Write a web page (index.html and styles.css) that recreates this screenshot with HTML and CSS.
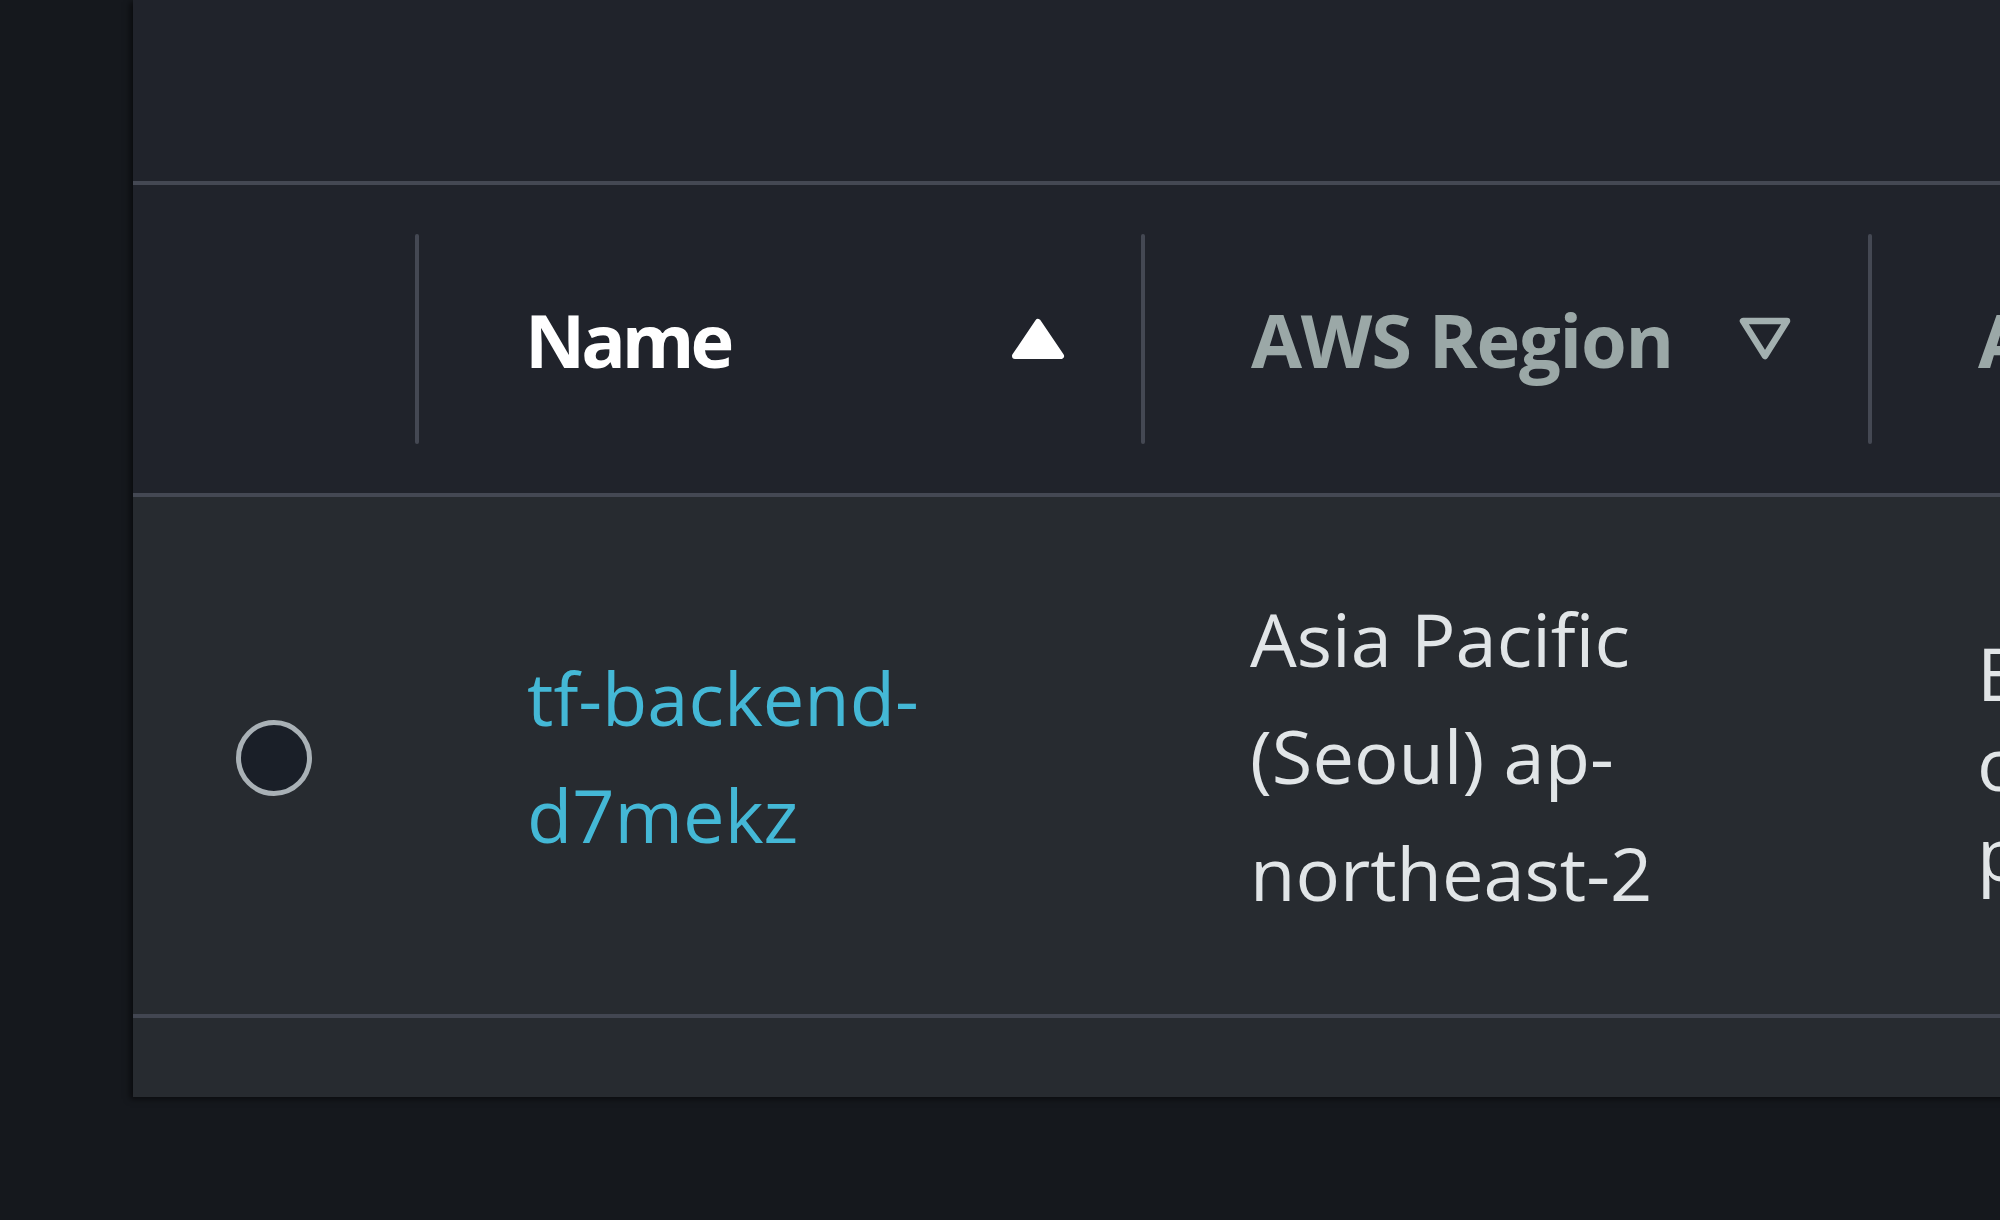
FILE: index.html
```html
<!DOCTYPE html>
<html lang="en">
<head>
<meta charset="utf-8">
<title>Buckets</title>
<link rel="stylesheet" href="styles.css">
</head>
<body>
<div class="page">
  <div class="panel">
    <div class="panel-top"></div>
    <div class="thead">
      <div class="th th-select"></div>
      <div class="th">
        <span class="divider"></span>
        <span class="th-label th-active">Name</span>
        <svg class="sort" width="56" height="44" viewBox="0 0 56 44"><path d="M28 5 L51 39 L5 39 Z" fill="#ffffff" stroke="#ffffff" stroke-width="6" stroke-linejoin="round"/></svg>
      </div>
      <div class="th">
        <span class="divider"></span>
        <span class="th-label">AWS Region</span>
        <svg class="sort" width="56" height="46" viewBox="0 0 56 46"><path d="M6 5 L50 5 L28 40 Z" fill="none" stroke="#a3b0b0" stroke-width="6.5" stroke-linejoin="round"/></svg>
      </div>
      <div class="th">
        <span class="divider"></span>
        <span class="th-label">Access</span>
      </div>
    </div>
    <div class="tbody">
      <div class="row">
        <div class="td td-select"><span class="radio"></span></div>
        <div class="td td-name"><a class="link" href="#">tf-backend-<br>d7mekz</a></div>
        <div class="td td-region">Asia Pacific<br>(Seoul) ap-<br>northeast-2</div>
        <div class="td td-access">Bucket and<br>objects not<br>public</div>
      </div>
    </div>
    <div class="tfoot"></div>
  </div>
</div>
</body>
</html>
```
FILE: styles.css
```css
html, body {
  margin: 0;
  padding: 0;
  width: 2000px;
  height: 1220px;
  overflow: hidden;
  background: #15181d;
  font-family: "Open Sans", "Noto Sans", sans-serif;
}

.page {
  display: flex;
  padding-left: 133px;
  height: 1220px;
  box-sizing: border-box;
}

.panel {
  flex: 0 0 auto;
  width: 2600px;
  height: 1097px;
  display: flex;
  flex-direction: column;
  background: #20232b;
  box-shadow: -3px 2px 6px rgba(0, 0, 0, 0.55);
}

.panel-top {
  height: 181px;
  flex: 0 0 auto;
}

.thead {
  display: grid;
  grid-template-columns: 282px 726px 727px 860px;
  height: 308px;
  border-top: 4px solid #444853;
  border-bottom: 4px solid #444853;
  background: #20232b;
  flex: 0 0 auto;
}

.th {
  display: flex;
  align-items: center;
  padding-right: 75px;
}

.divider {
  flex: 0 0 auto;
  width: 4px;
  height: 210px;
  border-radius: 2px;
  background: #444853;
}

.th-label {
  margin-left: 106px;
  font-size: 74px;
  font-weight: 700;
  letter-spacing: -1.2px;
  color: #9ba8a7;
  white-space: nowrap;
}

.th-active {
  color: #ffffff;
  letter-spacing: -4px;
}

.sort {
  margin-left: auto;
  flex: 0 0 auto;
}

.tbody {
  background: #272b30;
  flex: 0 0 auto;
}

.row {
  display: grid;
  grid-template-columns: 282px 726px 727px 860px;
  height: 517px;
  border-bottom: 4px solid #424651;
}

.td {
  display: flex;
  align-items: center;
  font-size: 74px;
  line-height: 117px;
  color: #e1e5e7;
}

.td-select {
  justify-content: center;
}

.radio {
  width: 66px;
  height: 66px;
  margin-top: 4px;
  border-radius: 50%;
  border: 5px solid #a9b1b6;
  background: #1a1f28;
}

.td-name {
  padding-left: 112px;
}

.link {
  color: #44b8d6;
  text-decoration: none;
}

.td-region {
  padding-left: 109px;
}

.td-access {
  padding-left: 109px;
  line-height: 90px;
  padding-top: 14px;
  box-sizing: border-box;
}

.tfoot {
  flex: 1 1 auto;
  background: #272b30;
}
```
